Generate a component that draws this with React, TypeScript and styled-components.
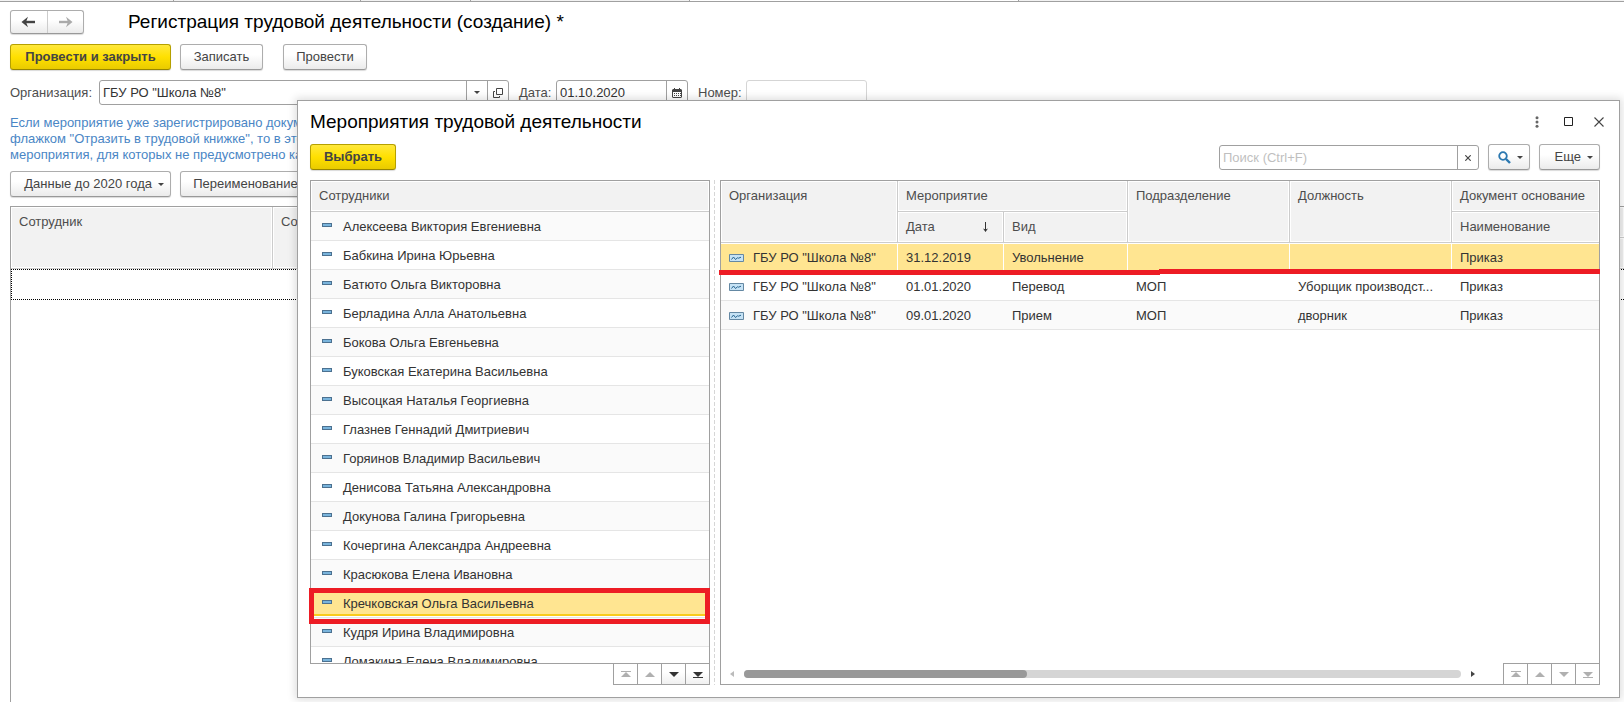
import React from "react";
import styled, { createGlobalStyle, css } from "styled-components";

const LINE = "#a0a0a0";
const SOFT_LINE = "#cccccc";
const ROW_LINE = "#e5e5e5";
const HEADER_BG = "#f2f2f2";
const MARK = "#ed1c24";

const GlobalStyle = createGlobalStyle`
  *, *::before, *::after { box-sizing: border-box; }
  body {
    margin: 0;
    background: #fff;
    color: #333;
    font: 13px/16px "Liberation Sans", Arial, sans-serif;
  }
  button, input { font: inherit; color: inherit; }
`;

const Page = styled.div`
  position: relative;
  display: flex;
  flex-direction: column;
  height: 100vh;
  min-height: 400px;
  overflow: hidden;
`;

const TabStrip = styled.div`
  display: flex;
  flex: none;
  height: 2px;
  border-bottom: 1px solid ${LINE};
`;

const TabEdge = styled.span<{ $width?: number; $active?: boolean }>`
  flex: ${(p) => (p.$width ? `0 0 ${p.$width}px` : "1")};
  border-right: 1px solid ${LINE};
  background: ${(p) => (p.$active ? "#fff" : HEADER_BG)};

  &:last-child { border-right: 0; }
`;

const Form = styled.main`
  display: flex;
  flex: 1;
  flex-direction: column;
  min-height: 0;
  padding: 8px 0 0 10px;
`;

const FormHeader = styled.header`
  display: flex;
  align-items: center;
  gap: 44px;
  height: 24px;
  margin-bottom: 10px;
`;

const raised = css`
  border: 1px solid #adadad;
  border-bottom-color: #999;
  border-radius: 3px;
  background: linear-gradient(#fff 40%, #ebebeb);
  box-shadow: 0 1px 1px rgba(0, 0, 0, 0.15);
`;

const History = styled.nav`
  ${raised}
  display: flex;
  width: 74px;
  height: 24px;
`;

const HistoryButton = styled.button`
  display: flex;
  flex: 1;
  align-items: center;
  justify-content: center;
  padding: 0;
  border: 0;
  background: none;
  color: #444;

  & + & { border-left: 1px solid #ccc; }
  &:disabled { color: #aaa; }
`;

const Title = styled.h1`
  margin: 0;
  color: #000;
  font-size: 19px;
  font-weight: 400;
  line-height: 24px;
  white-space: nowrap;
`;

const Toolbar = styled.div`
  display: flex;
  flex: none;
  gap: 9px;
`;

const ToolGroup = styled.div`
  display: flex;
  margin-left: 11px;
`;

const Button = styled.button<{ $primary?: boolean; $menu?: boolean; $width: number }>`
  ${raised}
  display: flex;
  flex: none;
  align-items: center;
  justify-content: ${(p) => (p.$menu ? "flex-end" : "center")};
  gap: 6px;
  width: ${(p) => p.$width}px;
  height: 26px;
  padding: ${(p) => (p.$menu ? "0 6px 0 0" : "0")};
  color: #444;
  font-size: 13px;
  white-space: nowrap;
  ${(p) =>
    p.$primary &&
    css`
      border-color: #b5a000;
      border-bottom-color: #988600;
      background: linear-gradient(#ffe83c, #ffe000 50%, #e9cb00);
      font-weight: 700;
    `}
`;

const Fields = styled.div`
  display: flex;
  flex: none;
  gap: 10px;
  margin: 10px 0;
`;

const Field = styled.div`
  display: flex;
  align-items: center;
`;

const Label = styled.label<{ $width: number }>`
  width: ${(p) => p.$width}px;
  color: #4d4d4d;
`;

const InputBox = styled.div<{ $width: number; $muted?: boolean }>`
  display: flex;
  flex: none;
  width: ${(p) => p.$width}px;
  height: 25px;
  border: 1px solid ${(p) => (p.$muted ? "#d5d5d5" : LINE)};
  border-radius: 3px;
  background: #fff;
`;

const Input = styled.input`
  flex: 1;
  min-width: 0;
  padding: 0 3px;
  border: 0;
  outline: 0;
  background: none;

  &::placeholder { color: #bfbfbf; opacity: 1; }
  &::-webkit-search-cancel-button { display: none; }
`;

const InputButton = styled.button`
  display: flex;
  flex: none;
  align-items: center;
  justify-content: center;
  width: 21px;
  padding: 0;
  border: 0;
  border-left: 1px solid ${LINE};
  background: none;
  color: #444;
`;

const Hint = styled.p`
  flex: none;
  margin: 0 0 8px;
  color: #4a86c5;
  white-space: nowrap;
`;

const Documents = styled.div`
  flex: 1;
  min-height: 0;
  margin-top: 9px;
  overflow: hidden;
  border: solid ${LINE};
  border-width: 1px 0 0 1px;
`;

const Table = styled.table`
  width: 100%;
  border-spacing: 0;
  table-layout: fixed;
`;

const Th = styled.th`
  height: 31px;
  padding: 0 8px;
  overflow: hidden;
  border-right: 1px solid ${SOFT_LINE};
  border-bottom: 1px solid ${SOFT_LINE};
  background: ${HEADER_BG};
  box-shadow: inset 0 0 0 1px #fff;
  color: #4d4d4d;
  font-weight: 400;
  text-align: left;
  vertical-align: top;
  line-height: 30px;
  white-space: nowrap;

  &:last-child { border-right: 0; }
`;

const SortLabel = styled.span`
  display: flex;
  align-items: center;
  justify-content: space-between;
  padding-right: 7px;
`;

const FocusedCell = styled.td`
  height: 31px;
  padding: 0;
  border: 1px dotted #000;
  border-right: 0;
`;

const Dialog = styled.section`
  position: absolute;
  inset: 100px 4px 4px 297px;
  display: flex;
  flex-direction: column;
  border: 1px solid ${LINE};
  background: #fff;
  box-shadow: 0 0 8px 2px rgba(0, 0, 0, 0.13);
`;

const DialogHeader = styled.header`
  display: flex;
  flex: none;
  align-items: center;
  justify-content: space-between;
  height: 43px;
  padding: 0 10px 2px 12px;
`;

const WindowControls = styled.div`
  display: flex;
  gap: 11px;
  align-items: center;
`;

const WindowButton = styled.button`
  display: flex;
  align-items: center;
  justify-content: center;
  width: 20px;
  height: 20px;
  padding: 0;
  border: 0;
  background: none;
`;

const DialogBody = styled.div`
  display: flex;
  flex: 1;
  flex-direction: column;
  gap: 10px;
  min-height: 0;
  padding: 0 19px 12px 12px;
`;

const Spacer = styled.span`
  flex: 1;
`;

const SearchBox = styled(InputBox)`
  margin-top: 1px;
`;

const Panes = styled.div`
  display: flex;
  flex: 1;
  min-height: 0;
`;

const Pane = styled.div<{ $width?: number }>`
  position: relative;
  display: flex;
  flex: ${(p) => (p.$width ? `0 0 ${p.$width}px` : "1")};
  flex-direction: column;
  min-width: 0;
`;

const Splitter = styled.div`
  flex: none;
  width: 1px;
  margin: 0 5px 0 4px;
  background: repeating-linear-gradient(#d6d6d6 0 4px, #fff 4px 6px);
`;

const List = styled.div`
  flex: 1;
  min-height: 0;
  overflow: hidden;
  border: 1px solid ${LINE};
`;

const Grid = styled.div`
  display: flex;
  flex: 1;
  flex-direction: column;
  justify-content: space-between;
  min-height: 0;
  overflow: hidden;
  border: 1px solid ${LINE};
`;

const Td = styled.td`
  height: 29px;
  padding: 2px 8px 0;
  overflow: hidden;
  border-bottom: 1px solid ${ROW_LINE};
  text-overflow: ellipsis;
  white-space: nowrap;
`;

const Row = styled.tr<{ $shaded?: boolean; $selected?: boolean; $active?: boolean }>`
  background: ${(p) => (p.$selected ? "#ffe591" : p.$shaded ? "#fafafa" : "#fff")};

  ${(p) =>
    p.$selected &&
    css`
      ${Td} {
        box-shadow: inset 0 1px #fff, inset 0 -1px #fff
          ${p.$active ? ", inset 0 -3px #f9cb1c" : ""};
      }
      ${Td}:not(:last-child) {
        border-right: 1px solid #fff;
      }
    `}
`;

const Entry = styled.span<{ $indent?: number }>`
  display: flex;
  align-items: center;
  gap: ${(p) => (p.$indent ? 11 : 9)}px;
  padding-left: ${(p) => p.$indent ?? 0}px;
`;

const Dash = styled.span`
  width: 10px;
  height: 4px;
  margin-bottom: 4px;
  border: 1px solid #4c7190;
  background: #79b4dc;
`;

const Pager = styled.div`
  display: flex;
  align-self: flex-end;
  border: solid ${LINE};
  border-width: 0 1px 1px;
`;

const GridPager = styled(Pager)`
  border-width: 1px 0 0 1px;
`;

const PagerButton = styled.button`
  display: flex;
  align-items: center;
  justify-content: center;
  width: 24px;
  height: 20px;
  padding: 0;
  border: 0;
  border-right: 1px solid ${LINE};
  background: linear-gradient(#fff 40%, #f0f0f0);
  color: #333;

  &:last-child { width: 23px; border-right: 0; }
  &:disabled { background: #fff; color: #b0b0b0; }
`;

const GridFooter = styled.div`
  display: flex;
  flex: none;
  align-items: center;
  gap: 10px;
  padding-left: 9px;
`;

const ScrollTrack = styled.div`
  flex: 1;
  height: 8px;
  border-radius: 4px;
  background: #d5d5d5;
`;

const ScrollThumb = styled.div`
  width: 39.5%;
  height: 8px;
  border-radius: 4px;
  background: #999;
`;

const ScrollArrow = styled.button`
  display: flex;
  padding: 0;
  border: 0;
  background: none;
  color: #444;

  &:disabled { color: #bbb; }
  &:last-of-type { margin-right: 18px; }
`;

const RowMark = styled.div`
  position: absolute;
  top: 408px;
  right: 0;
  left: -1px;
  height: 36px;
  border: 5px solid ${MARK};
`;

const Underline = styled.div<{ $second?: boolean }>`
  position: absolute;
  top: ${(p) => (p.$second ? 89 : 90)}px;
  left: ${(p) => (p.$second ? 439 : -1)}px;
  ${(p) => (p.$second ? "right: 0;" : "width: 441px;")}
  height: 5px;
  background: ${MARK};
`;

const Arrow = ({ back }: { back?: boolean }) => (
  <svg width="15" height="12" viewBox="0 0 15 12" fill="none" stroke="currentColor">
    {back ? (
      <>
        <path d="M3 6H14" strokeWidth="2.4" />
        <path d="M7 0.8L5 6L7 11.2L0.5 6Z" fill="currentColor" stroke="none" />
      </>
    ) : (
      <>
        <path d="M1 6H12" strokeWidth="2.4" />
        <path d="M8 0.8L10 6L8 11.2L14.5 6Z" fill="currentColor" stroke="none" />
      </>
    )}
  </svg>
);

const Caret = () => (
  <svg width="6" height="3" viewBox="0 0 6 3">
    <path d="M0 0H6L3 3Z" fill="currentColor" />
  </svg>
);

const OpenIcon = () => (
  <svg width="10" height="10" viewBox="0 0 10 10" fill="none" stroke="currentColor">
    <path d="M3.5 0.5H9.5V6.5H3.5ZM2 3.5H0.5V9.5H6.5V8" />
  </svg>
);

const CalendarIcon = () => (
  <svg width="10" height="10" viewBox="0 0 10 10">
    <path d="M1 1H2V0H3V1H7V0H8V1H9L10 2V9L9 10H1L0 9V2Z" fill="currentColor" />
    <path d="M1 4H9V9H1Z" fill="#fff" />
    <path d="M2 5H3V6H2ZM4 5H5V6H4ZM6 5H7V6H6ZM2 7H3V8H2ZM4 7H5V8H4ZM6 7H7V8H6ZM8 5H9V6H8ZM8 7H9V8H8Z" fill="currentColor" />
  </svg>
);

const DotsIcon = () => (
  <svg width="4" height="12" viewBox="0 0 4 12" fill="#666">
    <circle cx="2" cy="1.8" r="1.5" />
    <circle cx="2" cy="6" r="1.5" />
    <circle cx="2" cy="10.2" r="1.5" />
  </svg>
);

const MaximizeIcon = () => (
  <svg width="9" height="9" viewBox="0 0 9 9">
    <path d="M0.5 0.5H8.5V8.5H0.5Z" fill="none" stroke="#222" />
  </svg>
);

const CloseIcon = ({ size = 10 }: { size?: number }) => (
  <svg width={size} height={size} viewBox="0 0 10 10">
    <path d="M0.5 0.5L9.5 9.5M9.5 0.5L0.5 9.5" stroke="#444" strokeWidth={size < 10 ? 2 : 1.1} />
  </svg>
);

const SearchIcon = () => (
  <svg width="13" height="13" viewBox="0 0 13 13" fill="none" stroke="#2b78b0">
    <circle cx="5" cy="5" r="3.8" strokeWidth="1.8" />
    <path d="M8 8L12 12" strokeWidth="2.4" />
  </svg>
);

const SortIcon = () => (
  <svg width="5" height="10" viewBox="0 0 5 10">
    <path d="M2.5 0V9" stroke="#333" />
    <path d="M0 6.5L2.5 7.5L5 6.5L2.5 10Z" fill="#333" />
  </svg>
);

const EventIcon = () => (
  <svg width="15" height="8" viewBox="0 0 15 8" fill="none">
    <path d="M0.5 0.5H14.5V7.5H0.5Z" fill="#c5e2f5" stroke="#6488a3" />
    <path d="M2.5 5.5L4.5 3L6.5 5.5L8.5 3.8L9.5 4.2L12 3.2" stroke="#25638f" />
  </svg>
);

const PagerIcon = ({ up, bar }: { up?: boolean; bar?: boolean }) => (
  <svg width="10" height="7" viewBox="0 0 10 7" fill="currentColor">
    {up ? <path d="M0 6H10L5 1Z" /> : <path d="M0 1H10L5 6Z" />}
    {bar && (up ? <path d="M0 0H10V1H0Z" /> : <path d="M0 6H10V7H0Z" />)}
  </svg>
);

const SideArrow = ({ left }: { left?: boolean }) => (
  <svg width="4" height="6" viewBox="0 0 4 6" fill="currentColor">
    <path d={left ? "M4 0V6L0 3Z" : "M0 0V6L4 3Z"} />
  </svg>
);

const PagerButtons = ({ down }: { down?: boolean }) => (
  <>
    <PagerButton disabled aria-label="В начало"><PagerIcon up bar /></PagerButton>
    <PagerButton disabled aria-label="Назад"><PagerIcon up /></PagerButton>
    <PagerButton disabled={!down} aria-label="Вперед"><PagerIcon /></PagerButton>
    <PagerButton disabled={!down} aria-label="В конец"><PagerIcon bar /></PagerButton>
  </>
);

const EMPLOYEES = [
  "Алексеева Виктория Евгениевна",
  "Бабкина Ирина Юрьевна",
  "Батюто Ольга Викторовна",
  "Берладина Алла Анатольевна",
  "Бокова Ольга Евгеньевна",
  "Буковская Екатерина Васильевна",
  "Высоцкая Наталья Георгиевна",
  "Глазнев Геннадий Дмитриевич",
  "Горяинов Владимир Васильевич",
  "Денисова Татьяна Александровна",
  "Докунова Галина Григорьевна",
  "Кочергина Александра Андреевна",
  "Красюкова Елена Ивановна",
  "Кречковская Ольга Васильевна",
  "Кудря Ирина Владимировна",
  "Ломакина Елена Владимировна",
];

const EVENTS = [
  ["31.12.2019", "Увольнение", "", "", "Приказ"],
  ["01.01.2020", "Перевод", "МОП", "Уборщик производст...", "Приказ"],
  ["09.01.2020", "Прием", "МОП", "дворник", "Приказ"],
];

const EventsDialog = () => (
  <Dialog role="dialog" aria-labelledby="dialog-title">
    <DialogHeader>
      <Title as="h2" id="dialog-title">Мероприятия трудовой деятельности</Title>
      <WindowControls>
        <WindowButton aria-label="Меню"><DotsIcon /></WindowButton>
        <WindowButton aria-label="Развернуть"><MaximizeIcon /></WindowButton>
        <WindowButton aria-label="Закрыть"><CloseIcon /></WindowButton>
      </WindowControls>
    </DialogHeader>
    <DialogBody>
      <Toolbar>
        <Button $primary $width={86}>Выбрать</Button>
        <Spacer />
        <SearchBox $width={260}>
          <Input type="search" aria-label="Поиск" placeholder="Поиск (Ctrl+F)" />
          <InputButton aria-label="Очистить"><CloseIcon size={6} /></InputButton>
        </SearchBox>
        <Button $menu $width={42} aria-label="Найти"><SearchIcon /><Caret /></Button>
        <Button $menu $width={61}>Еще <Caret /></Button>
      </Toolbar>
      <Panes>
        <Pane $width={400}>
          <List>
            <Table>
              <thead>
                <tr><Th>Сотрудники</Th></tr>
              </thead>
              <tbody>
                {EMPLOYEES.map((name, i) => (
                  <Row key={name} $shaded={i % 2 === 0} $selected={i === 13} $active>
                    <Td><Entry $indent={3}><Dash />{name}</Entry></Td>
                  </Row>
                ))}
              </tbody>
            </Table>
          </List>
          <Pager><PagerButtons down /></Pager>
          <RowMark />
        </Pane>
        <Splitter />
        <Pane>
          <Grid>
            <Table>
              <colgroup>
                <col style={{ width: 177 }} />
                <col style={{ width: 106 }} />
                <col style={{ width: 124 }} />
                <col style={{ width: 162 }} />
                <col style={{ width: 162 }} />
                <col />
              </colgroup>
              <thead>
                <tr>
                  <Th rowSpan={2}>Организация</Th>
                  <Th colSpan={2}>Мероприятие</Th>
                  <Th rowSpan={2}>Подразделение</Th>
                  <Th rowSpan={2}>Должность</Th>
                  <Th>Документ основание</Th>
                </tr>
                <tr>
                  <Th><SortLabel>Дата <SortIcon /></SortLabel></Th>
                  <Th>Вид</Th>
                  <Th>Наименование</Th>
                </tr>
              </thead>
              <tbody>
                {EVENTS.map((cells, i) => (
                  <Row key={cells[0]} $shaded={i === 2} $selected={i === 0}>
                    <Td><Entry><EventIcon />ГБУ РО "Школа №8"</Entry></Td>
                    {cells.map((text, c) => <Td key={c}>{text}</Td>)}
                  </Row>
                ))}
              </tbody>
            </Table>
            <GridFooter>
              <ScrollArrow disabled aria-label="Прокрутить влево"><SideArrow left /></ScrollArrow>
              <ScrollTrack><ScrollThumb /></ScrollTrack>
              <ScrollArrow aria-label="Прокрутить вправо"><SideArrow /></ScrollArrow>
              <GridPager><PagerButtons /></GridPager>
            </GridFooter>
          </Grid>
          <Underline />
          <Underline $second />
        </Pane>
      </Panes>
    </DialogBody>
  </Dialog>
);

export default function App() {
  return (
    <>
      <GlobalStyle />
      <Page>
        <TabStrip>
          <TabEdge $width={174} />
          <TabEdge $width={187} />
          <TabEdge $width={110} />
          <TabEdge $width={219} />
          <TabEdge $width={329} $active />
          <TabEdge />
        </TabStrip>
        <Form>
          <FormHeader>
            <History>
              <HistoryButton aria-label="Назад"><Arrow back /></HistoryButton>
              <HistoryButton disabled aria-label="Вперед"><Arrow /></HistoryButton>
            </History>
            <Title>Регистрация трудовой деятельности (создание) *</Title>
          </FormHeader>
          <Toolbar>
            <Button $primary $width={161}>Провести и закрыть</Button>
            <Button $width={83}>Записать</Button>
            <ToolGroup><Button $width={84}>Провести</Button></ToolGroup>
          </Toolbar>
          <Fields>
            <Field>
              <Label htmlFor="org" $width={89}>Организация:</Label>
              <InputBox $width={410}>
                <Input id="org" defaultValue={'ГБУ РО "Школа №8"'} />
                <InputButton aria-label="Выбрать из списка"><Caret /></InputButton>
                <InputButton aria-label="Открыть"><OpenIcon /></InputButton>
              </InputBox>
            </Field>
            <Field>
              <Label htmlFor="date" $width={37}>Дата:</Label>
              <InputBox $width={132}>
                <Input id="date" defaultValue="01.10.2020" />
                <InputButton aria-label="Календарь"><CalendarIcon /></InputButton>
              </InputBox>
            </Field>
            <Field>
              <Label htmlFor="number" $width={48}>Номер:</Label>
              <InputBox $width={121} $muted>
                <Input id="number" />
              </InputBox>
            </Field>
          </Fields>
          <Hint>
            Если мероприятие уже зарегистрировано документом
            <br />
            флажком "Отразить в трудовой книжке", то в этом
            <br />
            мероприятия, для которых не предусмотрено кадровых
          </Hint>
          <Toolbar>
            <Button $menu $width={161}>Данные до 2020 года <Caret /></Button>
            <Button $width={131}>Переименование</Button>
          </Toolbar>
          <Documents>
            <Table>
              <colgroup>
                <col style={{ width: 262 }} />
                <col style={{ width: 262 }} />
                <col />
              </colgroup>
              <thead>
                <tr>
                  <Th rowSpan={2}>Сотрудник</Th>
                  <Th rowSpan={2}>Сотрудник</Th>
                  <Th />
                </tr>
                <tr><Th /></tr>
              </thead>
              <tbody>
                <tr><FocusedCell colSpan={3} /></tr>
              </tbody>
            </Table>
          </Documents>
        </Form>
        <EventsDialog />
      </Page>
    </>
  );
}
